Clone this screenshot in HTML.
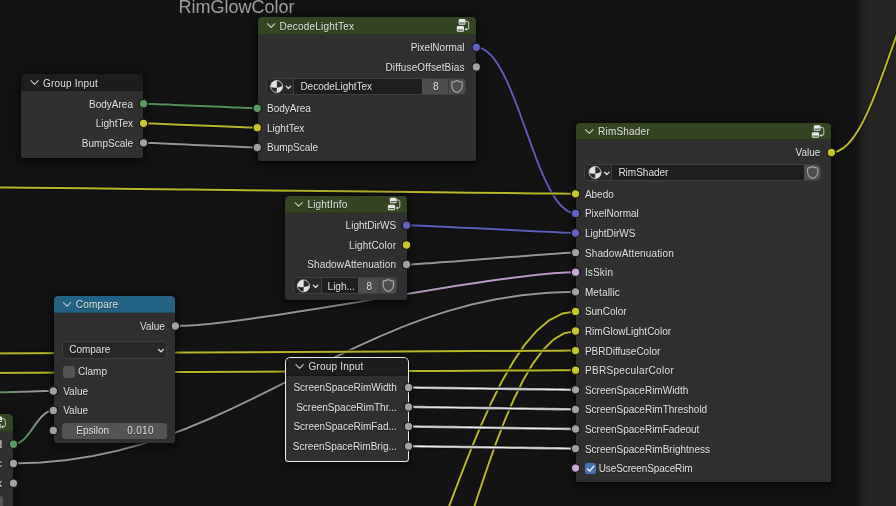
<!DOCTYPE html>
<html><head><meta charset="utf-8"><title>Node Editor</title>
<style>
html,body{margin:0;padding:0}
body{width:896px;height:506px;overflow:hidden;background:#131313;position:relative;font-family:"Liberation Sans",sans-serif;font-size:10px;color:#e3e3e3;line-height:12px}
.abs{position:absolute}
.frame{position:absolute;left:857.6px;top:-10px;width:60px;height:530px;background:linear-gradient(to right,#171717 0,#1c1c1c 3px,#222222 7px,#242424 10px)}
.flabel{position:absolute;left:178.6px;top:-3.5px;font-size:18px;line-height:21px;color:#a0a0a0;white-space:nowrap}
.node{position:absolute;background:#303030;border-radius:4.5px 4.5px 2.5px 2.5px;box-shadow:0 2px 10px 2px rgba(0,0,0,.48),0 0.5px 3px rgba(0,0,0,.55)}
.hdr{position:absolute;left:0;top:0;right:0;height:17.5px;border-radius:4.5px 4.5px 0 0;box-shadow:inset 0 -1px 0 rgba(0,0,0,.18)}
.t{position:absolute;white-space:nowrap;height:12px;line-height:12px;text-shadow:0 1px 1px rgba(0,0,0,.45)}
.r{text-align:right}
.idw{position:absolute;height:16.5px;box-sizing:border-box;border:1px solid #3f3f3f;border-radius:3.5px;background:#1e1e1e;overflow:hidden}
.idw>i{position:absolute;top:0;bottom:0;display:block}
.sel{position:absolute;box-sizing:border-box;border:1px solid #3f3f3f;border-radius:3.5px;background:#282828}
.fld{position:absolute;border-radius:3.5px;background:#545454}
svg{position:absolute;left:0;top:0;overflow:visible}
</style></head>
<body>
<div id="root" style="position:absolute;left:0;top:0;width:896px;height:506px;will-change:transform">
<div class="frame"></div>
<div class="abs" style="left:866px;top:0;width:30px;height:506px;background-image:radial-gradient(circle,#292929 0.5px,rgba(41,41,41,0) 1.1px);background-size:17.85px 17.85px;background-position:-1.65px 0.12px"></div>
<div class="flabel">RimGlowColor</div>
<svg width="896" height="506" viewBox="0 0 896 506" fill="none" stroke-linecap="round" stroke-linejoin="round">
<defs><linearGradient id="g0" gradientUnits="userSpaceOnUse" x1="175.3" y1="0" x2="575.6" y2="0"><stop offset="0.28" stop-color="#959595"/><stop offset="0.72" stop-color="#bd9ac7"/></linearGradient><linearGradient id="g1" gradientUnits="userSpaceOnUse" x1="13.4" y1="0" x2="53.4" y2="0"><stop offset="0.28" stop-color="#53905b"/><stop offset="0.72" stop-color="#959595"/></linearGradient><linearGradient id="g2" gradientUnits="userSpaceOnUse" x1="-22" y1="0" x2="53.3" y2="0"><stop offset="0.28" stop-color="#53905b"/><stop offset="0.72" stop-color="#959595"/></linearGradient></defs>
<path d="M143.5,103.7 L144.8,103.7 L147.0,103.8 L150.0,103.9 L153.7,104.0 L158.1,104.2 L163.1,104.4 L168.6,104.6 L174.4,104.9 L180.6,105.2 L187.1,105.4 L193.7,105.7 L200.4,106.0 L207.1,106.3 L213.7,106.6 L220.2,106.8 L226.4,107.1 L232.2,107.4 L237.7,107.6 L242.7,107.8 L247.1,108.0 L250.8,108.1 L253.8,108.2 L256.0,108.3 L257.3,108.3" stroke="#0b0b0b" stroke-opacity=".75" stroke-width="3.8"/>
<path d="M143.5,103.7 L144.8,103.7 L147.0,103.8 L150.0,103.9 L153.7,104.0 L158.1,104.2 L163.1,104.4 L168.6,104.6 L174.4,104.9 L180.6,105.2 L187.1,105.4 L193.7,105.7 L200.4,106.0 L207.1,106.3 L213.7,106.6 L220.2,106.8 L226.4,107.1 L232.2,107.4 L237.7,107.6 L242.7,107.8 L247.1,108.0 L250.8,108.1 L253.8,108.2 L256.0,108.3 L257.3,108.3" stroke="#53905b" stroke-width="2.0"/>
<path d="M143.5,123.3 L144.8,123.3 L146.9,123.4 L149.9,123.5 L153.6,123.6 L158.0,123.8 L163.0,124.0 L168.5,124.2 L174.4,124.4 L180.6,124.7 L187.1,125.0 L193.7,125.2 L200.4,125.5 L207.1,125.8 L213.7,126.0 L220.2,126.3 L226.4,126.6 L232.3,126.8 L237.8,127.0 L242.8,127.2 L247.2,127.4 L250.9,127.5 L253.9,127.6 L256.0,127.7 L257.3,127.7" stroke="#0b0b0b" stroke-opacity=".75" stroke-width="3.8"/>
<path d="M143.5,123.3 L144.8,123.3 L146.9,123.4 L149.9,123.5 L153.6,123.6 L158.0,123.8 L163.0,124.0 L168.5,124.2 L174.4,124.4 L180.6,124.7 L187.1,125.0 L193.7,125.2 L200.4,125.5 L207.1,125.8 L213.7,126.0 L220.2,126.3 L226.4,126.6 L232.3,126.8 L237.8,127.0 L242.8,127.2 L247.2,127.4 L250.9,127.5 L253.9,127.6 L256.0,127.7 L257.3,127.7" stroke="#b9b926" stroke-width="2.0"/>
<path d="M143.5,142.8 L144.8,142.8 L147.0,142.9 L150.0,143.0 L153.8,143.1 L158.2,143.3 L163.1,143.5 L168.6,143.8 L174.5,144.0 L180.7,144.3 L187.1,144.6 L193.7,144.9 L200.4,145.2 L207.1,145.4 L213.7,145.7 L220.1,146.0 L226.3,146.3 L232.2,146.5 L237.7,146.8 L242.6,147.0 L247.0,147.2 L250.8,147.3 L253.8,147.4 L256.0,147.5 L257.3,147.5" stroke="#0b0b0b" stroke-opacity=".75" stroke-width="3.8"/>
<path d="M143.5,142.8 L144.8,142.8 L147.0,142.9 L150.0,143.0 L153.8,143.1 L158.2,143.3 L163.1,143.5 L168.6,143.8 L174.5,144.0 L180.7,144.3 L187.1,144.6 L193.7,144.9 L200.4,145.2 L207.1,145.4 L213.7,145.7 L220.1,146.0 L226.3,146.3 L232.2,146.5 L237.7,146.8 L242.6,147.0 L247.0,147.2 L250.8,147.3 L253.8,147.4 L256.0,147.5 L257.3,147.5" stroke="#959595" stroke-width="2.0"/>
<path d="M476.3,47.3 L481.2,48.1 L485.8,50.6 L490.3,54.4 L494.7,59.6 L498.9,65.9 L503.0,73.3 L507.0,81.4 L510.9,90.4 L514.7,99.9 L518.5,109.8 L522.2,120.0 L526.0,130.4 L529.7,140.7 L533.4,150.9 L537.2,160.8 L541.0,170.3 L544.9,179.3 L548.9,187.4 L553.0,194.8 L557.2,201.1 L561.6,206.3 L566.1,210.1 L570.7,212.6 L575.6,213.4" stroke="#0b0b0b" stroke-opacity=".75" stroke-width="3.8"/>
<path d="M476.3,47.3 L481.2,48.1 L485.8,50.6 L490.3,54.4 L494.7,59.6 L498.9,65.9 L503.0,73.3 L507.0,81.4 L510.9,90.4 L514.7,99.9 L518.5,109.8 L522.2,120.0 L526.0,130.4 L529.7,140.7 L533.4,150.9 L537.2,160.8 L541.0,170.3 L544.9,179.3 L548.9,187.4 L553.0,194.8 L557.2,201.1 L561.6,206.3 L566.1,210.1 L570.7,212.6 L575.6,213.4" stroke="#5c5cb9" stroke-width="2.0"/>
<path d="M-70.0,186.6 L-20.6,187.2 L31.0,187.7 L84.0,188.3 L137.8,189.0 L191.6,189.6 L244.6,190.2 L296.2,190.7 L345.6,191.3 L392.1,191.8 L435.0,192.3 L473.5,192.7 L507.0,193.1 L534.6,193.4 L555.8,193.6 L569.7,193.8 L575.6,193.8" stroke="#0b0b0b" stroke-opacity=".75" stroke-width="3.8"/>
<path d="M-70.0,186.6 L-20.6,187.2 L31.0,187.7 L84.0,188.3 L137.8,189.0 L191.6,189.6 L244.6,190.2 L296.2,190.7 L345.6,191.3 L392.1,191.8 L435.0,192.3 L473.5,192.7 L507.0,193.1 L534.6,193.4 L555.8,193.6 L569.7,193.8 L575.6,193.8" stroke="#b9b926" stroke-width="2.0"/>
<path d="M406.5,225.2 L408.6,225.2 L411.9,225.4 L416.5,225.5 L422.1,225.8 L428.6,226.1 L436.0,226.4 L444.1,226.8 L452.8,227.2 L461.9,227.7 L471.4,228.1 L481.2,228.6 L491.1,229.1 L500.9,229.6 L510.7,230.1 L520.2,230.5 L529.3,231.0 L538.0,231.4 L546.1,231.8 L553.5,232.1 L560.0,232.4 L565.6,232.7 L570.2,232.8 L573.5,233.0 L575.6,233.0" stroke="#0b0b0b" stroke-opacity=".75" stroke-width="3.8"/>
<path d="M406.5,225.2 L408.6,225.2 L411.9,225.4 L416.5,225.5 L422.1,225.8 L428.6,226.1 L436.0,226.4 L444.1,226.8 L452.8,227.2 L461.9,227.7 L471.4,228.1 L481.2,228.6 L491.1,229.1 L500.9,229.6 L510.7,230.1 L520.2,230.5 L529.3,231.0 L538.0,231.4 L546.1,231.8 L553.5,232.1 L560.0,232.4 L565.6,232.7 L570.2,232.8 L573.5,233.0 L575.6,233.0" stroke="#5c5cb9" stroke-width="2.0"/>
<path d="M406.5,264.5 L409.2,264.4 L413.0,264.3 L417.9,264.0 L423.7,263.6 L430.3,263.2 L437.6,262.6 L445.6,262.1 L454.0,261.4 L462.9,260.7 L472.1,260.0 L481.5,259.3 L491.1,258.6 L500.6,257.8 L510.0,257.1 L519.2,256.4 L528.1,255.7 L536.5,255.0 L544.5,254.5 L551.8,253.9 L558.4,253.5 L564.2,253.1 L569.1,252.8 L572.9,252.7 L575.6,252.6" stroke="#0b0b0b" stroke-opacity=".75" stroke-width="3.8"/>
<path d="M406.5,264.5 L409.2,264.4 L413.0,264.3 L417.9,264.0 L423.7,263.6 L430.3,263.2 L437.6,262.6 L445.6,262.1 L454.0,261.4 L462.9,260.7 L472.1,260.0 L481.5,259.3 L491.1,258.6 L500.6,257.8 L510.0,257.1 L519.2,256.4 L528.1,255.7 L536.5,255.0 L544.5,254.5 L551.8,253.9 L558.4,253.5 L564.2,253.1 L569.1,252.8 L572.9,252.7 L575.6,252.6" stroke="#959595" stroke-width="2.0"/>
<path d="M175.3,326.0 L185.6,325.7 L197.6,324.9 L211.0,323.7 L225.9,322.0 L241.9,320.0 L259.0,317.6 L277.0,314.9 L295.8,312.1 L315.2,309.0 L335.0,305.8 L355.2,302.5 L375.4,299.1 L395.7,295.7 L415.9,292.4 L435.7,289.2 L455.1,286.1 L473.9,283.3 L491.9,280.6 L509.0,278.2 L525.0,276.2 L539.9,274.5 L553.3,273.3 L565.3,272.5 L575.6,272.2" stroke="#0b0b0b" stroke-opacity=".75" stroke-width="3.8"/>
<path d="M175.3,326.0 L185.6,325.7 L197.6,324.9 L211.0,323.7 L225.9,322.0 L241.9,320.0 L259.0,317.6 L277.0,314.9 L295.8,312.1 L315.2,309.0 L335.0,305.8 L355.2,302.5 L375.4,299.1 L395.7,295.7 L415.9,292.4 L435.7,289.2 L455.1,286.1 L473.9,283.3 L491.9,280.6 L509.0,278.2 L525.0,276.2 L539.9,274.5 L553.3,273.3 L565.3,272.5 L575.6,272.2" stroke="url(#g0)" stroke-width="2.0"/>
<path d="M13.4,463.5 L40.9,462.6 L67.4,460.1 L92.9,456.1 L117.5,450.8 L141.3,444.2 L164.5,436.7 L187.1,428.2 L209.1,419.0 L230.8,409.2 L252.2,398.9 L273.4,388.4 L294.5,377.7 L315.6,366.9 L336.8,356.4 L358.2,346.1 L379.9,336.3 L401.9,327.1 L424.5,318.6 L447.7,311.1 L471.5,304.5 L496.1,299.2 L521.6,295.2 L548.1,292.7 L575.6,291.8" stroke="#0b0b0b" stroke-opacity=".75" stroke-width="3.8"/>
<path d="M13.4,463.5 L40.9,462.6 L67.4,460.1 L92.9,456.1 L117.5,450.8 L141.3,444.2 L164.5,436.7 L187.1,428.2 L209.1,419.0 L230.8,409.2 L252.2,398.9 L273.4,388.4 L294.5,377.7 L315.6,366.9 L336.8,356.4 L358.2,346.1 L379.9,336.3 L401.9,327.1 L424.5,318.6 L447.7,311.1 L471.5,304.5 L496.1,299.2 L521.6,295.2 L548.1,292.7 L575.6,291.8" stroke="#959595" stroke-width="2.0"/>
<path d="M13.4,444.2 L15.4,444.0 L17.2,443.5 L19.1,442.7 L20.8,441.7 L22.5,440.4 L24.1,438.9 L25.8,437.3 L27.3,435.4 L28.9,433.5 L30.4,431.5 L31.9,429.4 L33.4,427.3 L34.9,425.2 L36.4,423.1 L37.9,421.1 L39.5,419.2 L41.0,417.3 L42.6,415.7 L44.3,414.2 L46.0,412.9 L47.7,411.9 L49.6,411.1 L51.4,410.6 L53.4,410.4" stroke="#0b0b0b" stroke-opacity=".75" stroke-width="3.8"/>
<path d="M13.4,444.2 L15.4,444.0 L17.2,443.5 L19.1,442.7 L20.8,441.7 L22.5,440.4 L24.1,438.9 L25.8,437.3 L27.3,435.4 L28.9,433.5 L30.4,431.5 L31.9,429.4 L33.4,427.3 L34.9,425.2 L36.4,423.1 L37.9,421.1 L39.5,419.2 L41.0,417.3 L42.6,415.7 L44.3,414.2 L46.0,412.9 L47.7,411.9 L49.6,411.1 L51.4,410.6 L53.4,410.4" stroke="url(#g1)" stroke-width="2.0"/>
<path d="M-22.0,393.0 L-21.3,393.0 L-20.0,393.0 L-18.0,392.9 L-15.6,392.8 L-12.7,392.8 L-9.4,392.7 L-5.8,392.6 L-1.8,392.5 L2.3,392.3 L6.7,392.2 L11.1,392.1 L15.7,391.9 L20.2,391.8 L24.6,391.7 L29.0,391.6 L33.1,391.4 L37.1,391.3 L40.7,391.2 L44.0,391.1 L46.9,391.1 L49.3,391.0 L51.3,390.9 L52.6,390.9 L53.3,390.9" stroke="#0b0b0b" stroke-opacity=".75" stroke-width="3.8"/>
<path d="M-22.0,393.0 L-21.3,393.0 L-20.0,393.0 L-18.0,392.9 L-15.6,392.8 L-12.7,392.8 L-9.4,392.7 L-5.8,392.6 L-1.8,392.5 L2.3,392.3 L6.7,392.2 L11.1,392.1 L15.7,391.9 L20.2,391.8 L24.6,391.7 L29.0,391.6 L33.1,391.4 L37.1,391.3 L40.7,391.2 L44.0,391.1 L46.9,391.1 L49.3,391.0 L51.3,390.9 L52.6,390.9 L53.3,390.9" stroke="url(#g2)" stroke-width="2.0"/>
<path d="M429.3,559.8 L439.5,532.2 L449.7,504.7 L460.0,477.5 L470.3,451.2 L480.8,425.9 L491.5,402.2 L502.4,380.4 L513.7,360.9 L525.2,344.1 L537.1,330.4 L549.5,320.1 L562.3,313.6 L575.6,311.4" stroke="#0b0b0b" stroke-opacity=".75" stroke-width="3.8"/>
<path d="M429.3,559.8 L439.5,532.2 L449.7,504.7 L460.0,477.5 L470.3,451.2 L480.8,425.9 L491.5,402.2 L502.4,380.4 L513.7,360.9 L525.2,344.1 L537.1,330.4 L549.5,320.1 L562.3,313.6 L575.6,311.4" stroke="#b9b926" stroke-width="2.0"/>
<path d="M460.7,549.4 L469.4,522.1 L478.0,495.3 L486.8,469.2 L495.6,444.2 L504.6,420.8 L513.9,399.2 L523.3,380.0 L533.1,363.3 L543.1,349.8 L553.5,339.6 L564.3,333.2 L575.6,331.0" stroke="#0b0b0b" stroke-opacity=".75" stroke-width="3.8"/>
<path d="M460.7,549.4 L469.4,522.1 L478.0,495.3 L486.8,469.2 L495.6,444.2 L504.6,420.8 L513.9,399.2 L523.3,380.0 L533.1,363.3 L543.1,349.8 L553.5,339.6 L564.3,333.2 L575.6,331.0" stroke="#b9b926" stroke-width="2.0"/>
<path d="M-71.7,353.7 L-21.9,353.5 L30.1,353.2 L83.6,353.0 L137.8,352.7 L192.0,352.4 L245.5,352.2 L297.5,351.9 L347.3,351.7 L394.1,351.5 L437.1,351.3 L475.7,351.1 L509.1,350.9 L536.5,350.8 L557.2,350.7 L570.5,350.6 L575.6,350.6" stroke="#0b0b0b" stroke-opacity=".75" stroke-width="3.8"/>
<path d="M-71.7,353.7 L-21.9,353.5 L30.1,353.2 L83.6,353.0 L137.8,352.7 L192.0,352.4 L245.5,352.2 L297.5,351.9 L347.3,351.7 L394.1,351.5 L437.1,351.3 L475.7,351.1 L509.1,350.9 L536.5,350.8 L557.2,350.7 L570.5,350.6 L575.6,350.6" stroke="#b9b926" stroke-width="2.0"/>
<path d="M-71.7,373.3 L-21.9,373.1 L30.1,372.8 L83.6,372.6 L137.8,372.3 L192.0,372.0 L245.5,371.8 L297.5,371.5 L347.3,371.3 L394.1,371.1 L437.1,370.9 L475.7,370.7 L509.1,370.5 L536.5,370.4 L557.2,370.3 L570.5,370.2 L575.6,370.2" stroke="#0b0b0b" stroke-opacity=".75" stroke-width="3.8"/>
<path d="M-71.7,373.3 L-21.9,373.1 L30.1,372.8 L83.6,372.6 L137.8,372.3 L192.0,372.0 L245.5,371.8 L297.5,371.5 L347.3,371.3 L394.1,371.1 L437.1,370.9 L475.7,370.7 L509.1,370.5 L536.5,370.4 L557.2,370.3 L570.5,370.2 L575.6,370.2" stroke="#b9b926" stroke-width="2.0"/>
<path d="M831.4,152.5 L837.2,151.5 L842.8,148.5 L848.2,143.8 L853.4,137.5 L858.5,129.8 L863.4,120.9 L868.2,110.9 L872.8,100.0 L877.4,88.4 L881.9,76.3 L886.4,63.9 L890.9,51.2 L895.4,38.6 L899.9,26.2 L904.4,14.1 L909.0,2.5 L913.6,-8.4 L918.4,-18.4 L923.3,-27.3 L928.4,-35.0" stroke="#0b0b0b" stroke-opacity=".75" stroke-width="3.8"/>
<path d="M831.4,152.5 L837.2,151.5 L842.8,148.5 L848.2,143.8 L853.4,137.5 L858.5,129.8 L863.4,120.9 L868.2,110.9 L872.8,100.0 L877.4,88.4 L881.9,76.3 L886.4,63.9 L890.9,51.2 L895.4,38.6 L899.9,26.2 L904.4,14.1 L909.0,2.5 L913.6,-8.4 L918.4,-18.4 L923.3,-27.3 L928.4,-35.0" stroke="#b9b926" stroke-width="2.0"/>
<path d="M408.5,387.5 L409.7,387.5 L412.4,387.5 L416.5,387.6 L421.8,387.7 L428.2,387.8 L435.5,387.9 L443.7,388.0 L452.5,388.1 L461.9,388.2 L471.7,388.4 L481.8,388.5 L492.1,388.7 L502.3,388.8 L512.4,388.9 L522.2,389.1 L531.6,389.2 L540.4,389.3 L548.6,389.4 L555.9,389.5 L562.3,389.6 L567.6,389.7 L571.7,389.8 L574.4,389.8 L575.6,389.8" stroke="#0b0b0b" stroke-opacity=".8" stroke-width="4.4"/>
<path d="M408.5,387.5 L409.7,387.5 L412.4,387.5 L416.5,387.6 L421.8,387.7 L428.2,387.8 L435.5,387.9 L443.7,388.0 L452.5,388.1 L461.9,388.2 L471.7,388.4 L481.8,388.5 L492.1,388.7 L502.3,388.8 L512.4,388.9 L522.2,389.1 L531.6,389.2 L540.4,389.3 L548.6,389.4 L555.9,389.5 L562.3,389.6 L567.6,389.7 L571.7,389.8 L574.4,389.8 L575.6,389.8" stroke="#9c9c9c" stroke-width="2.6"/>
<path d="M408.5,387.5 L409.7,387.5 L412.4,387.5 L416.5,387.6 L421.8,387.7 L428.2,387.8 L435.5,387.9 L443.7,388.0 L452.5,388.1 L461.9,388.2 L471.7,388.4 L481.8,388.5 L492.1,388.7 L502.3,388.8 L512.4,388.9 L522.2,389.1 L531.6,389.2 L540.4,389.3 L548.6,389.4 L555.9,389.5 L562.3,389.6 L567.6,389.7 L571.7,389.8 L574.4,389.8 L575.6,389.8" stroke="#ededed" stroke-width="1.05"/>
<path d="M408.5,406.9 L409.7,406.9 L412.5,406.9 L416.5,407.0 L421.9,407.1 L428.2,407.2 L435.6,407.3 L443.8,407.4 L452.6,407.5 L462.0,407.7 L471.8,407.8 L481.8,408.0 L492.1,408.1 L502.3,408.3 L512.3,408.5 L522.1,408.6 L531.5,408.8 L540.3,408.9 L548.5,409.0 L555.9,409.1 L562.3,409.2 L567.6,409.3 L571.6,409.4 L574.4,409.4 L575.6,409.4" stroke="#0b0b0b" stroke-opacity=".8" stroke-width="4.4"/>
<path d="M408.5,406.9 L409.7,406.9 L412.5,406.9 L416.5,407.0 L421.9,407.1 L428.2,407.2 L435.6,407.3 L443.8,407.4 L452.6,407.5 L462.0,407.7 L471.8,407.8 L481.8,408.0 L492.1,408.1 L502.3,408.3 L512.3,408.5 L522.1,408.6 L531.5,408.8 L540.3,408.9 L548.5,409.0 L555.9,409.1 L562.3,409.2 L567.6,409.3 L571.6,409.4 L574.4,409.4 L575.6,409.4" stroke="#9c9c9c" stroke-width="2.6"/>
<path d="M408.5,406.9 L409.7,406.9 L412.5,406.9 L416.5,407.0 L421.9,407.1 L428.2,407.2 L435.6,407.3 L443.8,407.4 L452.6,407.5 L462.0,407.7 L471.8,407.8 L481.8,408.0 L492.1,408.1 L502.3,408.3 L512.3,408.5 L522.1,408.6 L531.5,408.8 L540.3,408.9 L548.5,409.0 L555.9,409.1 L562.3,409.2 L567.6,409.3 L571.6,409.4 L574.4,409.4 L575.6,409.4" stroke="#ededed" stroke-width="1.05"/>
<path d="M408.5,426.5 L409.7,426.5 L412.5,426.5 L416.5,426.6 L421.9,426.7 L428.2,426.8 L435.6,426.9 L443.8,427.0 L452.6,427.1 L462.0,427.3 L471.8,427.4 L481.8,427.6 L492.1,427.8 L502.3,427.9 L512.3,428.1 L522.1,428.2 L531.5,428.4 L540.3,428.5 L548.5,428.6 L555.9,428.7 L562.3,428.8 L567.6,428.9 L571.6,429.0 L574.4,429.0 L575.6,429.0" stroke="#0b0b0b" stroke-opacity=".8" stroke-width="4.4"/>
<path d="M408.5,426.5 L409.7,426.5 L412.5,426.5 L416.5,426.6 L421.9,426.7 L428.2,426.8 L435.6,426.9 L443.8,427.0 L452.6,427.1 L462.0,427.3 L471.8,427.4 L481.8,427.6 L492.1,427.8 L502.3,427.9 L512.3,428.1 L522.1,428.2 L531.5,428.4 L540.3,428.5 L548.5,428.6 L555.9,428.7 L562.3,428.8 L567.6,428.9 L571.6,429.0 L574.4,429.0 L575.6,429.0" stroke="#9c9c9c" stroke-width="2.6"/>
<path d="M408.5,426.5 L409.7,426.5 L412.5,426.5 L416.5,426.6 L421.9,426.7 L428.2,426.8 L435.6,426.9 L443.8,427.0 L452.6,427.1 L462.0,427.3 L471.8,427.4 L481.8,427.6 L492.1,427.8 L502.3,427.9 L512.3,428.1 L522.1,428.2 L531.5,428.4 L540.3,428.5 L548.5,428.6 L555.9,428.7 L562.3,428.8 L567.6,428.9 L571.6,429.0 L574.4,429.0 L575.6,429.0" stroke="#ededed" stroke-width="1.05"/>
<path d="M408.5,446.2 L409.7,446.2 L412.4,446.2 L416.5,446.3 L421.8,446.4 L428.2,446.5 L435.6,446.6 L443.7,446.7 L452.6,446.8 L462.0,447.0 L471.8,447.1 L481.8,447.3 L492.1,447.4 L502.3,447.5 L512.3,447.7 L522.1,447.8 L531.5,448.0 L540.4,448.1 L548.5,448.2 L555.9,448.3 L562.3,448.4 L567.6,448.5 L571.7,448.6 L574.4,448.6 L575.6,448.6" stroke="#0b0b0b" stroke-opacity=".8" stroke-width="4.4"/>
<path d="M408.5,446.2 L409.7,446.2 L412.4,446.2 L416.5,446.3 L421.8,446.4 L428.2,446.5 L435.6,446.6 L443.7,446.7 L452.6,446.8 L462.0,447.0 L471.8,447.1 L481.8,447.3 L492.1,447.4 L502.3,447.5 L512.3,447.7 L522.1,447.8 L531.5,448.0 L540.4,448.1 L548.5,448.2 L555.9,448.3 L562.3,448.4 L567.6,448.5 L571.7,448.6 L574.4,448.6 L575.6,448.6" stroke="#9c9c9c" stroke-width="2.6"/>
<path d="M408.5,446.2 L409.7,446.2 L412.4,446.2 L416.5,446.3 L421.8,446.4 L428.2,446.5 L435.6,446.6 L443.7,446.7 L452.6,446.8 L462.0,447.0 L471.8,447.1 L481.8,447.3 L492.1,447.4 L502.3,447.5 L512.3,447.7 L522.1,447.8 L531.5,448.0 L540.4,448.1 L548.5,448.2 L555.9,448.3 L562.3,448.4 L567.6,448.5 L571.7,448.6 L574.4,448.6 L575.6,448.6" stroke="#ededed" stroke-width="1.05"/>
</svg>
<div class="node" style="left:21px;top:73.6px;width:122.4px;height:84.2px;"><div class="hdr" style="background:#1d1d1d;height:17.5px"></div><div class="t" style="left:22px;top:4.2px;letter-spacing:.2px">Group Input</div>
<div class="t r" style="right:10.4px;top:25.1px">BodyArea</div>
<div class="t r" style="right:10.4px;top:44.7px">LightTex</div>
<div class="t r" style="right:10.4px;top:64.2px">BumpScale</div>
</div>
<div class="node" style="left:257.6px;top:16.8px;width:218.6px;height:144.2px;"><div class="hdr" style="background:#344621;height:18px"></div><div class="t" style="left:22px;top:4.2px;letter-spacing:.2px">DecodeLightTex</div>
<div class="t r" style="right:11.6px;top:25.5px">PixelNormal</div>
<div class="t r" style="letter-spacing:0.13px;right:11.6px;top:45.1px">DiffuseOffsetBias</div>
<div class="idw" style="left:8.4px;top:61.2px;width:199.8px;height:17px"><i style="left:0;width:26.4px;background:#282828;border-right:1px solid #3f3f3f"></i><i style="left:155.3px;right:0;background:#4d4d4d"></i><i style="left:180.8px;width:1px;background:#3b3b3b"></i></div><div class="t" style="left:42.8px;top:64.6px">DecodeLightTex</div><div class="t" style="left:165.3px;width:26.0px;text-align:center;top:64.6px">8</div>
<div class="t" style="left:9.4px;top:86.5px">BodyArea</div>
<div class="t" style="left:9.4px;top:105.9px">LightTex</div>
<div class="t" style="left:9.4px;top:125.7px">BumpScale</div>
</div>
<div class="node" style="left:285.4px;top:195.8px;width:121.2px;height:104.4px;"><div class="hdr" style="background:#344621;height:17.5px"></div><div class="t" style="left:22px;top:3.2px;letter-spacing:.2px">LightInfo</div>
<div class="t r" style="right:10.4px;top:24.4px">LightDirWS</div>
<div class="t r" style="letter-spacing:0.17px;right:10.4px;top:44.2px">LightColor</div>
<div class="t r" style="letter-spacing:0.13px;right:10.4px;top:63.7px">ShadowAttenuation</div>
<div class="idw" style="left:7.8px;top:81.2px;width:104.1px;height:17.5px"><i style="left:0;width:26.4px;background:#282828;border-right:1px solid #3f3f3f"></i><i style="left:63.9px;right:0;background:#4d4d4d"></i><i style="left:84.7px;width:1px;background:#3b3b3b"></i></div><div class="t" style="left:42.2px;top:84.8px">Ligh...</div><div class="t" style="left:73.3px;width:21.3px;text-align:center;top:84.8px">8</div>
</div>
<div class="node" style="left:53.8px;top:295.8px;width:121.5px;height:147.4px;"><div class="hdr" style="background:#246283;height:17.5px"></div><div class="t" style="left:22px;top:3.5px;letter-spacing:.2px">Compare</div>
<div class="t r" style="right:10.4px;top:25.2px">Value</div>
<div class="sel" style="left:8.4px;top:45.2px;width:104.4px;height:17.6px"></div>
<div class="t" style="left:15.4px;top:48.4px">Compare</div>
<div class="abs" style="left:9.0px;top:70.2px;width:12px;height:12px;background:#545454;border-radius:2.5px"></div>
<div class="t" style="left:24.3px;top:70.2px">Clamp</div>
<div class="t" style="left:9.4px;top:90.4px">Value</div>
<div class="t" style="left:9.4px;top:109.6px">Value</div>
<div class="fld" style="left:8.4px;top:126.8px;width:104.4px;height:16.2px"></div>
<div class="t" style="left:22.5px;top:129.6px">Epsilon</div>
<div class="t r" style="letter-spacing:0.3px;right:21.5px;top:129.6px">0.010</div>
</div>
<div class="node" style="left:286.4px;top:357.9px;width:121.8px;height:102.7px;box-shadow:0 0 0 1px #ededed,0 2px 10px 2px rgba(0,0,0,.42)"><div class="hdr" style="background:#1d1d1d;height:18px"></div><div class="t" style="left:22px;top:3.0px;letter-spacing:.2px">Group Input</div>
<div class="t r" style="right:11.4px;top:24.6px">ScreenSpaceRimWidth</div>
<div class="t r" style="right:11.4px;top:44.0px">ScreenSpaceRimThr...</div>
<div class="t r" style="right:11.4px;top:63.6px">ScreenSpaceRimFad...</div>
<div class="t r" style="right:11.4px;top:83.3px">ScreenSpaceRimBrig...</div>
</div>
<div class="node" style="left:576.1px;top:122.9px;width:254.8px;height:358.7px;border-radius:4.5px 4.5px 1.5px 1.5px;"><div class="hdr" style="background:#344621;height:17.5px"></div><div class="t" style="left:22px;top:3.5px;letter-spacing:.2px">RimShader</div>
<div class="t r" style="right:10.6px;top:24.6px">Value</div>
<div class="idw" style="left:8.3px;top:41.1px;width:236.6px;height:17px"><i style="left:0;width:26.0px;background:#282828;border-right:1px solid #3f3f3f"></i><i style="left:219.0px;right:0;background:#4d4d4d"></i></div><div class="t" style="left:42.3px;top:44.2px">RimShader</div>
<div class="t" style="left:8.8px;top:65.9px">Abedo</div>
<div class="t" style="left:8.8px;top:85.5px">PixelNormal</div>
<div class="t" style="left:8.8px;top:105.1px">LightDirWS</div>
<div class="t" style="letter-spacing:0.13px;left:8.8px;top:124.7px">ShadowAttenuation</div>
<div class="t" style="letter-spacing:0.17px;left:8.8px;top:144.3px">IsSkin</div>
<div class="t" style="letter-spacing:0.15px;left:8.8px;top:163.9px">Metallic</div>
<div class="t" style="left:8.8px;top:183.5px">SunColor</div>
<div class="t" style="left:8.8px;top:203.1px">RimGlowLightColor</div>
<div class="t" style="left:8.8px;top:222.7px">PBRDiffuseColor</div>
<div class="t" style="letter-spacing:0.33px;left:8.8px;top:242.3px">PBRSpecularColor</div>
<div class="t" style="left:8.8px;top:261.9px">ScreenSpaceRimWidth</div>
<div class="t" style="left:8.8px;top:281.5px">ScreenSpaceRimThreshold</div>
<div class="t" style="left:8.8px;top:301.1px">ScreenSpaceRimFadeout</div>
<div class="t" style="left:8.8px;top:320.7px">ScreenSpaceRimBrightness</div>
<div class="abs" style="left:8.5px;top:340.1px;width:11.3px;height:11px;background:#4772b3;border-radius:2.2px"></div>
<div class="t" style="letter-spacing:-0.1px;left:22.6px;top:340.4px">UseScreenSpaceRim</div>
</div>
<div class="node" style="left:-100px;top:414.4px;width:113.2px;height:140px;"><div class="hdr" style="background:#344621;height:17.5px"></div>
<div class="t r" style="right:11.2px;top:24.8px">d</div>
<div class="t r" style="right:11.2px;top:44.1px">c</div>
<div class="t r" style="right:11.2px;top:63.8px">k</div>
<div class="fld" style="left:20px;top:82.0px;width:83.2px;height:16px;border-radius:3px"></div>
</div>
<svg width="896" height="506" viewBox="0 0 896 506">
<g transform="translate(21.40,73.90)"><path d="M9.5,6.7 L13.2,10.4 L16.9,6.7" fill="none" stroke="#d4d4d4" stroke-width="1.05" stroke-linecap="round" stroke-linejoin="round"/></g>
<g transform="translate(257.90,17.00)"><path d="M9.5,6.7 L13.2,10.4 L16.9,6.7" fill="none" stroke="#d4d4d4" stroke-width="1.05" stroke-linecap="round" stroke-linejoin="round"/></g>
<g transform="translate(456.10,18.50)"><rect x="2.6" y="0.6" width="6.8" height="5.6" rx="1.3" fill="#e9e9e9"/><rect x="3.4" y="4.0" width="5.2" height="1.1" fill="#3f4d30"/><rect x="0.7" y="7.6" width="7.2" height="5.6" rx="1.3" fill="#e9e9e9"/><rect x="1.5" y="11.0" width="5.6" height="1.1" fill="#3f4d30"/><path d="M9.6,2.9 H11 Q12.6,2.9 12.6,4.5 V9.4 Q12.6,10.8 11.2,10.8 H10" fill="none" stroke="#d8d8d8" stroke-width="0.9"/><path d="M8.4,10.8 L10.5,9.3 V12.3 Z" fill="#e9e9e9"/></g>
<g transform="translate(269.70,79.50)"><circle cx="7" cy="7" r="6.0" fill="#2b2b2b"/><path d="M7.2,0.9 A6.1,6.1 0 0 0 0.95,7.6 Q4,8.6 7.2,8.2 Z" fill="#e4e4e4"/><path d="M7.2,8.2 Q10.6,7.8 13.05,6.3 A6.1,6.1 0 0 1 7.0,13.1 Z" fill="#e4e4e4"/><circle cx="7" cy="7" r="6.0" fill="none" stroke="#cfcfcf" stroke-width="0.9"/></g>
<g transform="translate(288.40,87.30)"><path d="M-2.3,-1.2 L0,1.2 L2.3,-1.2" fill="none" stroke="#e0e0e0" stroke-width="1.3" stroke-linecap="round" stroke-linejoin="round"/></g>
<g transform="translate(450.55,79.45)"><path transform="scale(1.0833,1.0769)" d="M6,1 C4.6,2 3,2.4 1.3,2.4 V6.2 C1.3,9 3.2,11 6,12.1 C8.8,11 10.7,9 10.7,6.2 V2.4 C9,2.4 7.4,2 6,1 Z" fill="none" stroke="#a9a9a9" stroke-width="1.02" stroke-linejoin="round"/></g>
<g transform="translate(285.40,195.80)"><path d="M9.5,6.7 L13.2,10.4 L16.9,6.7" fill="none" stroke="#d4d4d4" stroke-width="1.05" stroke-linecap="round" stroke-linejoin="round"/></g>
<g transform="translate(387.20,197.10)"><rect x="2.6" y="0.6" width="6.8" height="5.6" rx="1.3" fill="#e9e9e9"/><rect x="3.4" y="4.0" width="5.2" height="1.1" fill="#3f4d30"/><rect x="0.7" y="7.6" width="7.2" height="5.6" rx="1.3" fill="#e9e9e9"/><rect x="1.5" y="11.0" width="5.6" height="1.1" fill="#3f4d30"/><path d="M9.6,2.9 H11 Q12.6,2.9 12.6,4.5 V9.4 Q12.6,10.8 11.2,10.8 H10" fill="none" stroke="#d8d8d8" stroke-width="0.9"/><path d="M8.4,10.8 L10.5,9.3 V12.3 Z" fill="#e9e9e9"/></g>
<g transform="translate(296.50,278.90)"><circle cx="7" cy="7" r="6.0" fill="#2b2b2b"/><path d="M7.2,0.9 A6.1,6.1 0 0 0 0.95,7.6 Q4,8.6 7.2,8.2 Z" fill="#e4e4e4"/><path d="M7.2,8.2 Q10.6,7.8 13.05,6.3 A6.1,6.1 0 0 1 7.0,13.1 Z" fill="#e4e4e4"/><circle cx="7" cy="7" r="6.0" fill="none" stroke="#cfcfcf" stroke-width="0.9"/></g>
<g transform="translate(315.60,286.30)"><path d="M-2.3,-1.2 L0,1.2 L2.3,-1.2" fill="none" stroke="#e0e0e0" stroke-width="1.3" stroke-linecap="round" stroke-linejoin="round"/></g>
<g transform="translate(381.85,278.45)"><path transform="scale(1.0833,1.0769)" d="M6,1 C4.6,2 3,2.4 1.3,2.4 V6.2 C1.3,9 3.2,11 6,12.1 C8.8,11 10.7,9 10.7,6.2 V2.4 C9,2.4 7.4,2 6,1 Z" fill="none" stroke="#a9a9a9" stroke-width="1.02" stroke-linejoin="round"/></g>
<g transform="translate(53.80,295.80)"><path d="M9.5,6.7 L13.2,10.4 L16.9,6.7" fill="none" stroke="#d4d4d4" stroke-width="1.05" stroke-linecap="round" stroke-linejoin="round"/></g>
<g transform="translate(161.00,350.70)"><path d="M-2.3,-1.2 L0,1.2 L2.3,-1.2" fill="none" stroke="#e0e0e0" stroke-width="1.3" stroke-linecap="round" stroke-linejoin="round"/></g>
<g transform="translate(286.40,357.90)"><path d="M9.5,6.7 L13.2,10.4 L16.9,6.7" fill="none" stroke="#d4d4d4" stroke-width="1.05" stroke-linecap="round" stroke-linejoin="round"/></g>
<g transform="translate(576.10,122.90)"><path d="M9.5,6.7 L13.2,10.4 L16.9,6.7" fill="none" stroke="#d4d4d4" stroke-width="1.05" stroke-linecap="round" stroke-linejoin="round"/></g>
<g transform="translate(811.20,124.60)"><rect x="2.6" y="0.6" width="6.8" height="5.6" rx="1.3" fill="#e9e9e9"/><rect x="3.4" y="4.0" width="5.2" height="1.1" fill="#3f4d30"/><rect x="0.7" y="7.6" width="7.2" height="5.6" rx="1.3" fill="#e9e9e9"/><rect x="1.5" y="11.0" width="5.6" height="1.1" fill="#3f4d30"/><path d="M9.6,2.9 H11 Q12.6,2.9 12.6,4.5 V9.4 Q12.6,10.8 11.2,10.8 H10" fill="none" stroke="#d8d8d8" stroke-width="0.9"/><path d="M8.4,10.8 L10.5,9.3 V12.3 Z" fill="#e9e9e9"/></g>
<g transform="translate(588.10,165.50)"><circle cx="7" cy="7" r="6.0" fill="#2b2b2b"/><path d="M7.2,0.9 A6.1,6.1 0 0 0 0.95,7.6 Q4,8.6 7.2,8.2 Z" fill="#e4e4e4"/><path d="M7.2,8.2 Q10.6,7.8 13.05,6.3 A6.1,6.1 0 0 1 7.0,13.1 Z" fill="#e4e4e4"/><circle cx="7" cy="7" r="6.0" fill="none" stroke="#cfcfcf" stroke-width="0.9"/></g>
<g transform="translate(606.80,173.30)"><path d="M-2.3,-1.2 L0,1.2 L2.3,-1.2" fill="none" stroke="#e0e0e0" stroke-width="1.3" stroke-linecap="round" stroke-linejoin="round"/></g>
<g transform="translate(806.20,165.45)"><path transform="scale(1.0833,1.0769)" d="M6,1 C4.6,2 3,2.4 1.3,2.4 V6.2 C1.3,9 3.2,11 6,12.1 C8.8,11 10.7,9 10.7,6.2 V2.4 C9,2.4 7.4,2 6,1 Z" fill="none" stroke="#a9a9a9" stroke-width="1.02" stroke-linejoin="round"/></g>
<g transform="translate(585.00,463.00)"><path d="M2.4,5.9 L4.6,8.1 L8.8,3.2" fill="none" stroke="#fff" stroke-width="1.3" stroke-linecap="round" stroke-linejoin="round"/></g>
<g transform="translate(-7.30,415.90)"><rect x="2.6" y="0.6" width="6.8" height="5.6" rx="1.3" fill="#e9e9e9"/><rect x="3.4" y="4.0" width="5.2" height="1.1" fill="#3f4d30"/><rect x="0.7" y="7.6" width="7.2" height="5.6" rx="1.3" fill="#e9e9e9"/><rect x="1.5" y="11.0" width="5.6" height="1.1" fill="#3f4d30"/><path d="M9.6,2.9 H11 Q12.6,2.9 12.6,4.5 V9.4 Q12.6,10.8 11.2,10.8 H10" fill="none" stroke="#d8d8d8" stroke-width="0.9"/><path d="M8.4,10.8 L10.5,9.3 V12.3 Z" fill="#e9e9e9"/></g>
<circle cx="143.5" cy="103.7" r="4.25" fill="#5a9b62" stroke="#161616" stroke-width="1.2"/>
<circle cx="143.5" cy="123.3" r="4.25" fill="#c7c729" stroke="#161616" stroke-width="1.2"/>
<circle cx="143.5" cy="142.8" r="4.25" fill="#a1a1a1" stroke="#161616" stroke-width="1.2"/>
<circle cx="476.3" cy="47.3" r="4.25" fill="#6363c7" stroke="#161616" stroke-width="1.2"/>
<circle cx="476.3" cy="66.9" r="4.25" fill="#a1a1a1" stroke="#161616" stroke-width="1.2"/>
<circle cx="257.3" cy="108.3" r="4.25" fill="#5a9b62" stroke="#161616" stroke-width="1.2"/>
<circle cx="257.3" cy="127.7" r="4.25" fill="#c7c729" stroke="#161616" stroke-width="1.2"/>
<circle cx="257.3" cy="147.5" r="4.25" fill="#a1a1a1" stroke="#161616" stroke-width="1.2"/>
<circle cx="406.5" cy="225.2" r="4.25" fill="#6363c7" stroke="#161616" stroke-width="1.2"/>
<circle cx="406.5" cy="245.0" r="4.25" fill="#c7c729" stroke="#161616" stroke-width="1.2"/>
<circle cx="406.5" cy="264.5" r="4.25" fill="#a1a1a1" stroke="#161616" stroke-width="1.2"/>
<circle cx="175.3" cy="326" r="4.25" fill="#a1a1a1" stroke="#161616" stroke-width="1.2"/>
<circle cx="53.4" cy="391.0" r="4.25" fill="#a1a1a1" stroke="#161616" stroke-width="1.2"/>
<circle cx="53.4" cy="410.4" r="4.25" fill="#a1a1a1" stroke="#161616" stroke-width="1.2"/>
<circle cx="53.4" cy="430.4" r="4.25" fill="#a1a1a1" stroke="#161616" stroke-width="1.2"/>
<circle cx="408.5" cy="387.5" r="4.25" fill="#a1a1a1" stroke="#161616" stroke-width="1.2"/>
<circle cx="408.5" cy="406.9" r="4.25" fill="#a1a1a1" stroke="#161616" stroke-width="1.2"/>
<circle cx="408.5" cy="426.5" r="4.25" fill="#a1a1a1" stroke="#161616" stroke-width="1.2"/>
<circle cx="408.5" cy="446.2" r="4.25" fill="#a1a1a1" stroke="#161616" stroke-width="1.2"/>
<circle cx="575.6" cy="193.8" r="4.25" fill="#c7c729" stroke="#161616" stroke-width="1.2"/>
<circle cx="575.6" cy="213.4" r="4.25" fill="#6363c7" stroke="#161616" stroke-width="1.2"/>
<circle cx="575.6" cy="233.0" r="4.25" fill="#6363c7" stroke="#161616" stroke-width="1.2"/>
<circle cx="575.6" cy="252.60000000000002" r="4.25" fill="#a1a1a1" stroke="#161616" stroke-width="1.2"/>
<circle cx="575.6" cy="272.20000000000005" r="4.25" fill="#cca6d6" stroke="#161616" stroke-width="1.2"/>
<circle cx="575.6" cy="291.8" r="4.25" fill="#a1a1a1" stroke="#161616" stroke-width="1.2"/>
<circle cx="575.6" cy="311.40000000000003" r="4.25" fill="#c7c729" stroke="#161616" stroke-width="1.2"/>
<circle cx="575.6" cy="331.0" r="4.25" fill="#c7c729" stroke="#161616" stroke-width="1.2"/>
<circle cx="575.6" cy="350.6" r="4.25" fill="#c7c729" stroke="#161616" stroke-width="1.2"/>
<circle cx="575.6" cy="370.20000000000005" r="4.25" fill="#c7c729" stroke="#161616" stroke-width="1.2"/>
<circle cx="575.6" cy="389.8" r="4.25" fill="#a1a1a1" stroke="#161616" stroke-width="1.2"/>
<circle cx="575.6" cy="409.40000000000003" r="4.25" fill="#a1a1a1" stroke="#161616" stroke-width="1.2"/>
<circle cx="575.6" cy="429.0" r="4.25" fill="#a1a1a1" stroke="#161616" stroke-width="1.2"/>
<circle cx="575.6" cy="448.6" r="4.25" fill="#a1a1a1" stroke="#161616" stroke-width="1.2"/>
<circle cx="575.6" cy="468.1" r="4.25" fill="#cca6d6" stroke="#161616" stroke-width="1.2"/>
<circle cx="831.4" cy="152.5" r="4.25" fill="#c7c729" stroke="#161616" stroke-width="1.2"/>
<circle cx="13.4" cy="444.2" r="4.25" fill="#5a9b62" stroke="#161616" stroke-width="1.2"/>
<circle cx="13.4" cy="463.5" r="4.25" fill="#a1a1a1" stroke="#161616" stroke-width="1.2"/>
<circle cx="13.4" cy="483.2" r="4.25" fill="#a1a1a1" stroke="#161616" stroke-width="1.2"/>
</svg>
</div>
</body></html>
